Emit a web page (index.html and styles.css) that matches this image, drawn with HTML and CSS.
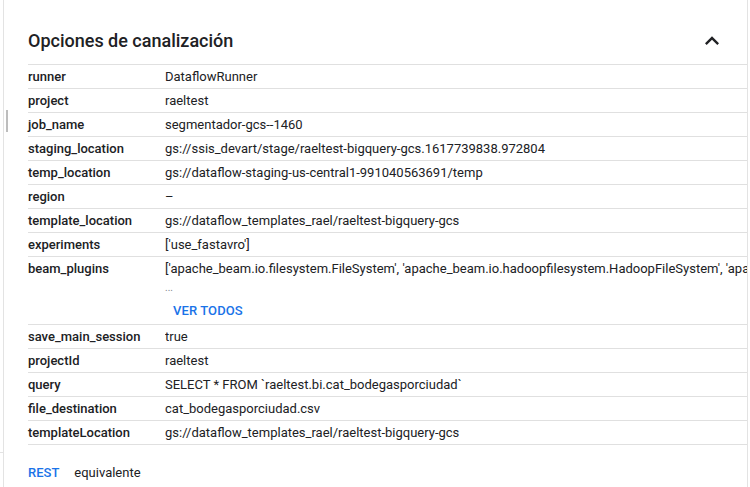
FILE: index.html
```html
<!DOCTYPE html>
<html lang="es">
<head>
<meta charset="utf-8">
<title>Opciones de canalización</title>
<link rel="stylesheet" href="styles.css">
</head>
<body>
<div class="handle"></div>
<div class="tick"></div>
<section class="card">
  <header class="card-head">
    <h2 class="title">Opciones de canalización</h2>
    <button class="collapse" aria-label="Contraer">
      <svg viewBox="0 0 24 24" width="28" height="28"><path d="M12 8l-6 6 1.41 1.41L12 10.83l4.59 4.58L18 14z"/></svg>
    </button>
  </header>
  <div class="table">
    <div class="row"><div class="key">runner</div><div class="val">DataflowRunner</div></div>
    <div class="row"><div class="key">project</div><div class="val">raeltest</div></div>
    <div class="row"><div class="key">job_name</div><div class="val">segmentador-gcs--1460</div></div>
    <div class="row"><div class="key">staging_location</div><div class="val">gs://ssis_devart/stage/raeltest-bigquery-gcs.1617739838.972804</div></div>
    <div class="row"><div class="key">temp_location</div><div class="val">gs://dataflow-staging-us-central1-991040563691/temp</div></div>
    <div class="row"><div class="key">region</div><div class="val">–</div></div>
    <div class="row"><div class="key">template_location</div><div class="val">gs://dataflow_templates_rael/raeltest-bigquery-gcs</div></div>
    <div class="row"><div class="key">experiments</div><div class="val">['use_fastavro']</div></div>
    <div class="row row-tall">
      <div class="key">beam_plugins</div>
      <div class="val val-multi">
        <div class="line">['apache_beam.io.filesystem.FileSystem', 'apache_beam.io.hadoopfilesystem.HadoopFileSystem', 'apache_beam.io.localfilesystem.LocalFileSystem']</div>
        <div class="dots">...</div>
        <button class="link-btn">VER TODOS</button>
      </div>
    </div>
    <div class="row"><div class="key">save_main_session</div><div class="val">true</div></div>
    <div class="row"><div class="key">projectId</div><div class="val">raeltest</div></div>
    <div class="row"><div class="key">query</div><div class="val">SELECT * FROM `raeltest.bi.cat_bodegasporciudad`</div></div>
    <div class="row"><div class="key">file_destination</div><div class="val">cat_bodegasporciudad.csv</div></div>
    <div class="row"><div class="key">templateLocation</div><div class="val">gs://dataflow_templates_rael/raeltest-bigquery-gcs</div></div>
  </div>
  <footer class="foot">
    <span class="rest">REST</span>
    <span class="equiv">equivalente</span>
  </footer>
</section>
</body>
</html>
```

FILE: styles.css
```css
* { box-sizing: border-box; }
html, body {
  margin: 0;
  padding: 0;
  background: #fff;
  height: 100%;
  overflow: hidden;
}
body {
  font-family: Roboto, "Liberation Sans", Arial, sans-serif;
  color: #202124;
  position: relative;
}
.card {
  margin: 0 2px 0 3px;
  border-left: 1px solid #e3e3e3;
  border-right: 1px solid #e3e3e3;
  min-height: 487px;
  padding: 0 0 0 24px;
}
.card-head {
  display: flex;
  align-items: center;
  justify-content: space-between;
  height: 64px;
  padding: 17px 21px 0 0;
}
.title {
  margin: 0;
  font-size: 18px;
  font-weight: 500;
  line-height: 24px;
  color: #202124;
}
.collapse {
  border: 0;
  background: none;
  padding: 0;
  width: 28px;
  height: 28px;
  display: flex;
}
.collapse svg { fill: #202124; }
.table {
  border-bottom: 1px solid #e0e0e0;
}
.row {
  display: flex;
  border-top: 1px solid #e0e0e0;
  height: 24px;
  font-size: 13px;
  line-height: 23px;
}
.row-tall { height: 68px; }
.key {
  width: 137px;
  flex: none;
  font-weight: 500;
}
.val {
  flex: 1;
  min-width: 0;
  white-space: nowrap;
  overflow: hidden;
}
.val-multi {
  display: flex;
  flex-direction: column;
  align-items: flex-start;
}
.line { height: 23px; }
.dots {
  font-size: 10px;
  line-height: 16px;
  height: 16px;
  color: #80868b;
}
.link-btn {
  border: 0;
  background: none;
  font-family: inherit;
  font-size: 13px;
  font-weight: 500;
  color: #1a73e8;
  height: 28px;
  padding: 0 8px;
  letter-spacing: 0.1px;
}
.foot {
  display: flex;
  gap: 15px;
  padding-top: 16px;
  font-size: 13px;
  line-height: 23px;
}
.rest { color: #1a73e8; font-weight: 500; }
.handle {
  position: absolute;
  left: 6px;
  top: 110px;
  width: 2px;
  height: 22px;
  background: #bdbdbd;
}
.tick {
  position: absolute;
  left: 0;
  top: 452px;
  width: 3px;
  height: 1px;
  background: #e3e3e3;
}
```
